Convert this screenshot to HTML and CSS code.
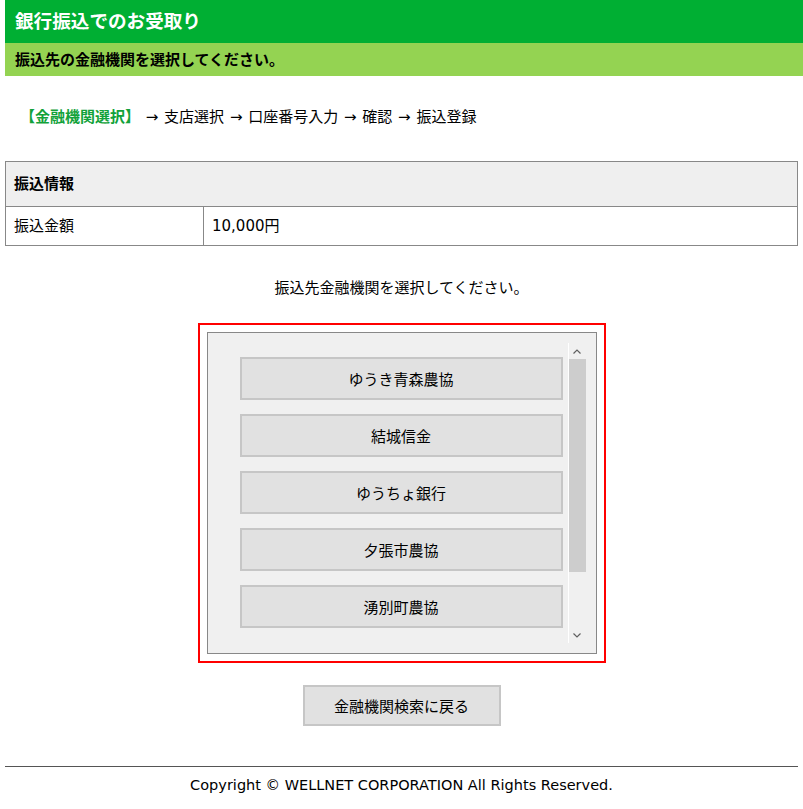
FILE: index.html
```html
<!DOCTYPE html>
<html lang="ja">
<head>
    <meta charset="UTF-8">
    <meta name="viewport" content="width=device-width, initial-scale=1.0">
    <title>銀行振込でのお受取り</title>
    <link rel="stylesheet" href="styles.css">
</head>
<body>
    <!-- タイトル -->
    <div class="title-bar">
        <h1>銀行振込でのお受取り</h1>
    </div>
    <div class="sub-bar">
        <h2>振込先の金融機関を選択してください。</h2>
    </div>

    <!-- 手順 -->
    <p class="steps"><span class="current">【金融機関選択】</span> → 支店選択 → 口座番号入力 → 確認 → 振込登録</p>

    <!-- 振込情報 -->
    <table class="info">
        <tr>
            <th colspan="2">振込情報</th>
        </tr>
        <tr>
            <td class="label">振込金額</td>
            <td>10,000円</td>
        </tr>
    </table>

    <p class="prompt">振込先金融機関を選択してください。</p>

    <!-- 金融機関一覧 -->
    <div class="bank-frame">
        <div class="bank-box">
            <div class="bank-scroll">
                <ul class="bank-list">
                    <li><button class="bank-btn">ゆうき青森農協</button></li>
                    <li><button class="bank-btn">結城信金</button></li>
                    <li><button class="bank-btn">ゆうちょ銀行</button></li>
                    <li><button class="bank-btn">夕張市農協</button></li>
                    <li><button class="bank-btn">湧別町農協</button></li>
                </ul>
                <div class="scrollbar">
                    <div class="arrow">
                        <svg width="8" height="5" viewBox="0 0 8 5"><polyline points="0.5,4.5 4,1 7.5,4.5" fill="none" stroke="#606060" stroke-width="1.2"/></svg>
                    </div>
                    <div class="track"><div class="thumb"></div></div>
                    <div class="arrow">
                        <svg width="8" height="5" viewBox="0 0 8 5"><polyline points="0.5,0.5 4,4 7.5,0.5" fill="none" stroke="#606060" stroke-width="1.2"/></svg>
                    </div>
                </div>
            </div>
        </div>
    </div>

    <div class="actions">
        <button class="btn-back">金融機関検索に戻る</button>
    </div>

    <!-- フッター -->
    <div class="footer">
        <p>Copyright © WELLNET CORPORATION All Rights Reserved.</p>
    </div>
</body>
</html>
```

FILE: styles.css
```css
body {
    font-family: "DejaVu Sans", "Noto Sans CJK JP", sans-serif;
    font-size: 15px;
    line-height: 20px;
    color: #000;
    background: #fff;
    margin: 0;
    padding: 0 5px;
}

.title-bar {
    background: #00af33;
    height: 43px;
    margin-right: -5px;
    padding-left: 10px;
    display: flex;
    align-items: center;
}

.title-bar h1 {
    margin: 0;
    color: #fff;
    font-size: 18.6px;
    font-weight: bold;
    line-height: 24px;
}

.sub-bar {
    background: #94d352;
    height: 33px;
    margin-right: -5px;
    padding-left: 10px;
    display: flex;
    align-items: center;
}

.sub-bar h2 {
    margin: 0;
    font-size: 15px;
    font-weight: bold;
}

.steps {
    margin: 31px 0 0;
    padding-left: 15px;
    word-spacing: 1px;
}

.steps .current {
    color: #12a23a;
    font-weight: bold;
}

.info {
    width: 100%;
    margin-top: 34px;
    border-collapse: collapse;
}

.info th,
.info td {
    border: 1px solid #888;
    padding: 0 8px;
    text-align: left;
}

.info th {
    background: #efefef;
    height: 44px;
    font-weight: bold;
}

.info td {
    height: 38px;
}

.info td.label {
    width: 181px;
}

.prompt {
    text-align: center;
    margin: 32px 0 0;
}

.bank-frame {
    width: 390px;
    margin: 25px auto 0;
    padding: 7px;
    border: 2px solid #f00;
}

.bank-box {
    background: #f0f0f0;
    border: 1px solid #888;
    padding: 10px;
}

.bank-scroll {
    display: flex;
    height: 300px;
    overflow: hidden;
}

.bank-list {
    flex: 1;
    list-style: none;
    margin: 0;
    padding: 14px 5px 0 22px;
    display: flex;
    flex-direction: column;
    gap: 14px;
}

.bank-btn,
.btn-back {
    font-family: inherit;
    font-size: 15px;
    color: #000;
    background: #e1e1e1;
    border: 2px solid #c6c6c6;
    cursor: pointer;
}

.bank-btn {
    width: 100%;
    height: 43px;
}

.scrollbar {
    width: 17px;
    border-left: 1px solid #fff;
    display: flex;
    flex-direction: column;
}

.arrow {
    height: 16px;
    display: flex;
    align-items: center;
    justify-content: center;
}

.track {
    flex: 1;
}

.thumb {
    height: 213px;
    background: #cdcdcd;
}

.actions {
    text-align: center;
    margin-top: 22px;
}

.btn-back {
    width: 198px;
    height: 41px;
}

.footer {
    margin-top: 40px;
    border-top: 1px solid #555;
    text-align: center;
}

.footer p {
    margin: 8px 0 0;
    font-size: 14.5px;
}
```
